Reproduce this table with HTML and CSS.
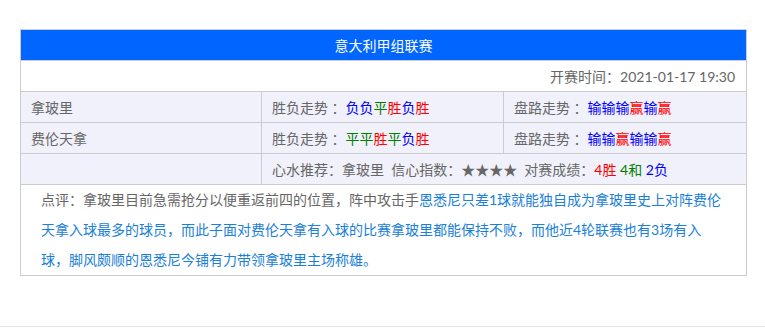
FILE: index.html
```html
<!DOCTYPE html>
<html lang="zh-CN">
<head>
<meta charset="utf-8">
<title>意大利甲组联赛</title>
<link rel="stylesheet" href="styles.css">
</head>
<body>
<div class="page">
  <table class="match">
    <colgroup><col class="c1"><col class="c2"><col class="c3"></colgroup>
    <tr class="head"><th colspan="3">意大利甲组联赛</th></tr>
    <tr class="time"><td colspan="3">开赛时间：2021-01-17 19:30</td></tr>
    <tr class="row">
      <td>拿玻里</td>
      <td>胜负走势 ：<span class="l">负</span><span class="l">负</span><span class="d">平</span><span class="w">胜</span><span class="l">负</span><span class="w">胜</span></td>
      <td>盘路走势 ：<span class="l">输</span><span class="l">输</span><span class="l">输</span><span class="w">赢</span><span class="l">输</span><span class="w">赢</span></td>
    </tr>
    <tr class="row">
      <td>费伦天拿</td>
      <td>胜负走势 ：<span class="d">平</span><span class="d">平</span><span class="w">胜</span><span class="d">平</span><span class="l">负</span><span class="w">胜</span></td>
      <td>盘路走势 ：<span class="l">输</span><span class="l">输</span><span class="w">赢</span><span class="l">输</span><span class="l">输</span><span class="w">赢</span></td>
    </tr>
    <tr class="row">
      <td></td>
      <td colspan="2">心水推荐：拿玻里&nbsp;&nbsp;信心指数：★★★★&nbsp;&nbsp;对赛成绩：<span class="w">4胜</span> <span class="d">4和</span> <span class="l">2负</span></td>
    </tr>
    <tr class="note">
      <td colspan="3">点评：拿玻里目前急需抢分以便重返前四的位置，阵中攻击手<span class="blue">恩悉尼只差1球就能独自成为拿玻里史上对阵费伦天拿入球最多的球员，而此子面对费伦天拿有入球的比赛拿玻里都能保持不败，而他近4轮联赛也有3场有入球，脚风颇顺的恩悉尼今铺有力带领拿玻里主场称雄。</span></td>
    </tr>
  </table>
  <div class="foot"></div>
</div>
</body>
</html>
```
FILE: styles.css
```css
html, body {
  margin: 0;
  padding: 0;
  background: #fff;
}
body {
  font-family: "Lato", "Noto Sans CJK SC", sans-serif;
  font-size: 14px;
  color: #666;
}
.page {
  padding-top: 29px;
}
.match {
  margin-left: 20px;
  width: 726px;
  border-collapse: collapse;
  table-layout: fixed;
}
.c1 { width: 241px; }
.c2 { width: 242px; }
.c3 { width: 243px; }
.match th, .match td {
  border: 1px solid #ccc;
  height: 30px;
  padding: 0 10px;
  box-sizing: border-box;
  line-height: 29px;
  text-align: left;
  font-weight: normal;
  white-space: nowrap;
}
.match tr.head th {
  background: #0066ff;
  color: #fff;
  text-align: center;
  height: 31px;
}
.match tr.time td {
  background: #fff;
  text-align: right;
  padding-right: 11px;
  height: 31px;
}
.match tr.row td {
  background: #f1f1fb;
  height: 31px;
}
.match tr.note td {
  background: #fff;
  white-space: normal;
  padding: 0 20px;
  line-height: 30px;
  height: auto;
}
.w { color: #ff0000; }
.l { color: #0000ff; }
.d { color: #008000; }
.blue { color: #1a80d8; }
.foot {
  margin-top: 50px;
  border-top: 1px solid #e6e6e6;
  height: 2px;
}
```
